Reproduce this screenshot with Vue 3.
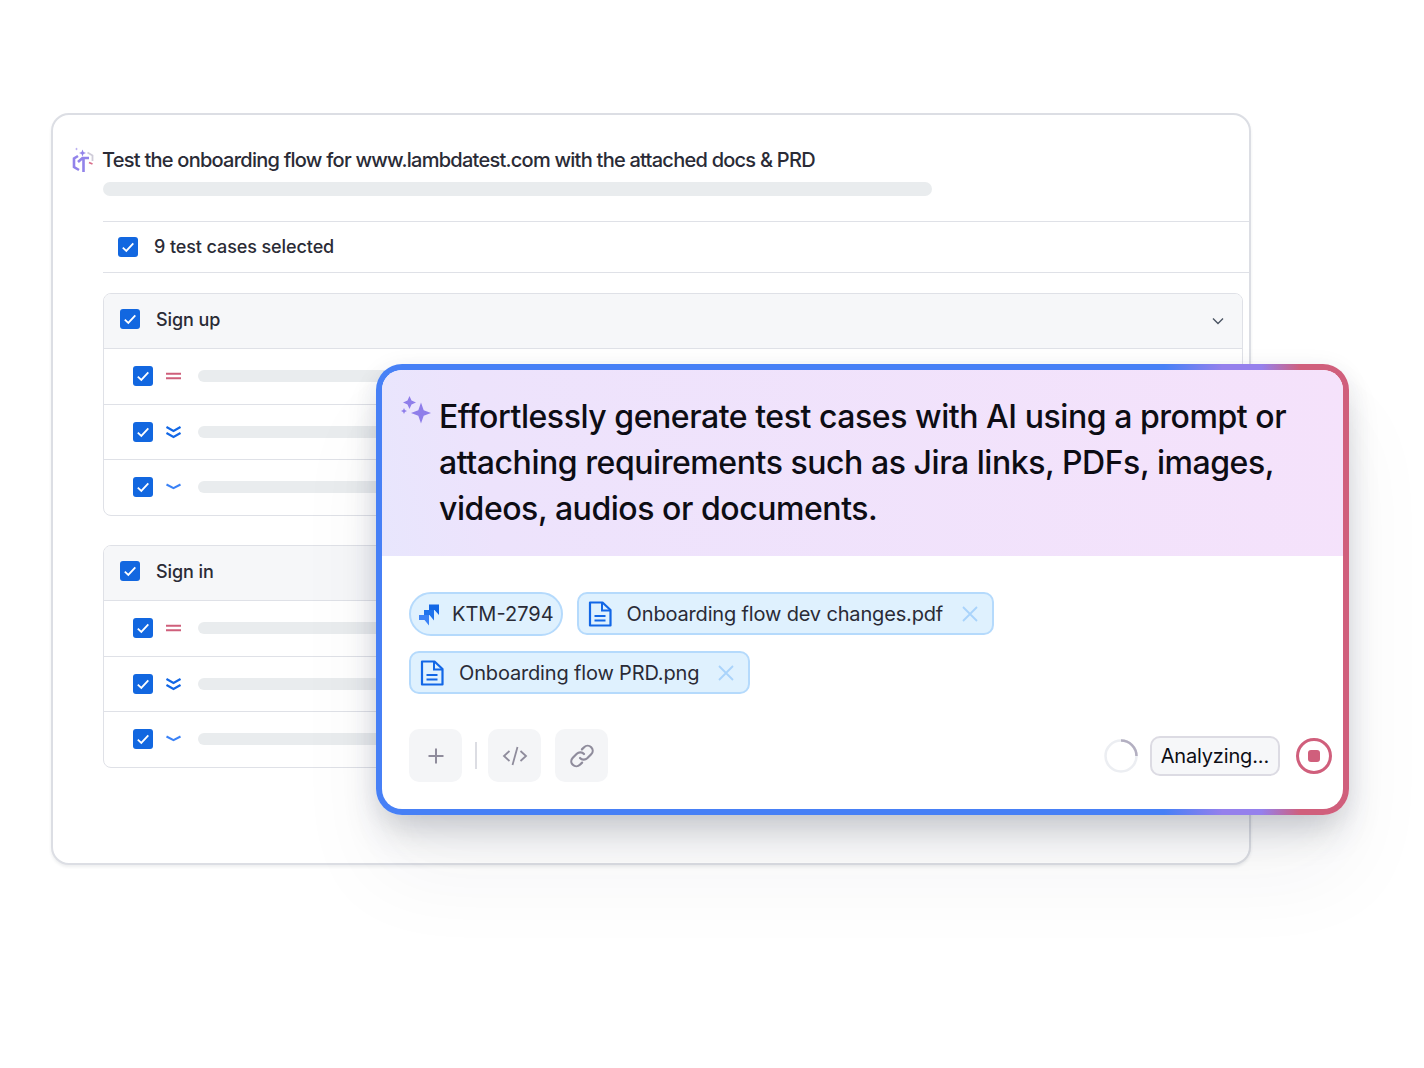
<script setup>
const groups = [
  { name: 'Sign up', rows: ['medium', 'lowest', 'low'] },
  { name: 'Sign in', rows: ['medium', 'lowest', 'low'] },
]
</script>

<template>
  <div class="stage">
    <section class="card">
      <div class="title-row">
        <svg class="ai-icon" viewBox="0 0 22 26" width="22" height="26" fill="none">
          <path d="M10.500 2.500l1 2.500 2.500 1-2.500 1-1 2.500-1-2.500-2.500-1 2.500-1z" fill="#9283ea" />
          <path d="M4.500 0.500l0.500 1 1 0.500-1 0.500-0.500 1-0.500-1-1-0.500 1-0.500z" fill="#b3a8f0" />
          <path d="M6 9L2 11.500V20l5 3" stroke="#9283ea" stroke-width="2.600" />
          <path d="M6 15l4.500-4H17M11.500 11.500V25" stroke="#9283ea" stroke-width="2.600" />
          <path d="M15.500 5.500L20.500 8.500V14" stroke="#cfccd9" stroke-width="1.800" />
          <path d="M17 15.500l3.500 1.500" stroke="#d9708c" stroke-width="1.800" />
        </svg>
        <div class="title-body">
          <h1 class="title">Test the onboarding flow for www.lambdatest.com with the attached docs &amp; PRD</h1>
          <div class="title-bar"></div>
        </div>
      </div>

      <div class="selected">
        <span class="check">
          <svg viewBox="0 0 20 20" width="20" height="20" fill="none"><path d="M4.800 10.600l3.500 3.300 7-7.600" stroke="#fff" stroke-width="1.800" /></svg>
        </span>
        <span>9 test cases selected</span>
      </div>

      <div class="groups">
        <div v-for="group in groups" :key="group.name" class="group">
          <div class="group-head">
            <span class="check">
              <svg viewBox="0 0 20 20" width="20" height="20" fill="none"><path d="M4.800 10.600l3.500 3.300 7-7.600" stroke="#fff" stroke-width="1.800" /></svg>
            </span>
            <span class="group-name">{{ group.name }}</span>
            <svg class="chev" viewBox="0 0 14 14" width="14" height="14" fill="none"><path d="M2 4.500l5 5 5-5" stroke="#4b5563" stroke-width="1.400" /></svg>
          </div>
          <div v-for="(row, i) in group.rows" :key="i" class="row">
            <span class="check">
              <svg viewBox="0 0 20 20" width="20" height="20" fill="none"><path d="M4.800 10.600l3.500 3.300 7-7.600" stroke="#fff" stroke-width="1.800" /></svg>
            </span>
            <svg v-if="row === 'medium'" class="prio" viewBox="0 0 15 12" width="15" height="12" fill="none"><path d="M0 3.700h15M0 8.200h15" stroke="#cf5f7b" stroke-width="2" /></svg>
            <svg v-else-if="row === 'lowest'" class="prio" viewBox="0 0 15 14" width="15" height="14" fill="none"><path d="M0.500 2l7 4 7-4M0.500 8l7 4 7-4" stroke="#1267e6" stroke-width="2.100" /></svg>
            <svg v-else class="prio" viewBox="0 0 15 12" width="15" height="12" fill="none"><path d="M0.500 3.500l7 3.600 7-3.600" stroke="#3b82f6" stroke-width="2.100" /></svg>
            <div class="row-bar"></div>
          </div>
        </div>
      </div>
    </section>

    <section class="popup">
      <div class="popup-inner">
        <header class="popup-head">
          <svg class="sparkle" viewBox="0 0 32 32" width="32" height="32" fill="#8f7eea">
            <path d="M9.500 2l2 4.500 4.500 2-4.500 2-2 4.500-2-4.500-4.500-2 4.500-2z" />
            <path d="M21 8.500l2.700 7.800 7.300 2.700-7.300 2.700-2.700 7.800-2.700-7.800-7.300-2.700 7.300-2.700z" />
            <path d="M4 14l0.900 2.100 2.100 0.900-2.100 0.900-0.900 2.100-0.900-2.100-2.100-0.900 2.100-0.900z" />
          </svg>
          <p class="headline">Effortlessly generate test cases with AI using a prompt or attaching requirements such as Jira links, PDFs, images, videos, audios or documents.</p>
        </header>

        <div class="popup-body">
          <div class="chips">
            <div class="chip-line">
              <div class="chip pill">
                <svg viewBox="0 0 22 23" width="22" height="23" fill="none">
                  <path d="M1 12h10v10.500L6.500 17H1z" fill="#3b82f6" />
                  <path d="M6 7h10v10.500L11.500 12H6z" fill="#1f73ec" />
                  <path d="M11 1.500h10V12L16.500 7H11z" fill="#1267e6" />
                </svg>
                <span>KTM-2794</span>
              </div>
              <div class="chip doc">
                <svg viewBox="0 0 24 26" width="24" height="26" fill="none">
                  <path d="M2 1.500h12.500L22.500 9v15.500H2z" stroke="#1267e6" stroke-width="2.200" stroke-linejoin="round" />
                  <path d="M14 1.500V9.500h8.500M6.500 15h11M6.500 19.500h11" stroke="#1267e6" stroke-width="2" />
                </svg>
                <span>Onboarding flow dev changes.pdf</span>
                <svg class="x" viewBox="0 0 18 18" width="18" height="18" fill="none"><path d="M2 2l14 14M16 2L2 16" stroke="#a9d3fb" stroke-width="1.800" /></svg>
              </div>
            </div>
            <div class="chip-line">
              <div class="chip doc">
                <svg viewBox="0 0 24 26" width="24" height="26" fill="none">
                  <path d="M2 1.500h12.500L22.500 9v15.500H2z" stroke="#1267e6" stroke-width="2.200" stroke-linejoin="round" />
                  <path d="M14 1.500V9.500h8.500M6.500 15h11M6.500 19.500h11" stroke="#1267e6" stroke-width="2" />
                </svg>
                <span>Onboarding flow PRD.png</span>
                <svg class="x" viewBox="0 0 18 18" width="18" height="18" fill="none"><path d="M2 2l14 14M16 2L2 16" stroke="#a9d3fb" stroke-width="1.800" /></svg>
              </div>
            </div>
          </div>

          <div class="toolbar">
            <button class="tool" type="button">
              <svg viewBox="0 0 20 20" width="20" height="20" fill="none"><path d="M10 2.500v15M2.500 10h15" stroke="#8f8c9c" stroke-width="2" /></svg>
            </button>
            <span class="sep"></span>
            <button class="tool" type="button">
              <svg viewBox="0 0 26 22" width="26" height="22" fill="none"><path d="M7.500 6L2 11l5.500 5M18.500 6L24 11l-5.500 5M15.500 2l-5 18" stroke="#8f8c9c" stroke-width="1.800" /></svg>
            </button>
            <button class="tool" type="button">
              <svg viewBox="0 0 26 26" width="26" height="26" fill="none"><path d="M11 15a5 5 0 0 0 7.200 0.300l4-4a5 5 0 0 0-7.100-7.100l-2.200 2.200" stroke="#8f8c9c" stroke-width="2.200" stroke-linecap="round" /><path d="M15 11a5 5 0 0 0-7.200-0.300l-4 4a5 5 0 0 0 7.100 7.100l2.200-2.200" stroke="#8f8c9c" stroke-width="2.200" stroke-linecap="round" /></svg>
            </button>
            <div class="status">
              <svg class="spin" viewBox="0 0 34 34" width="34" height="34" fill="none">
                <circle cx="17" cy="17" r="15.500" stroke="#eceef2" stroke-width="2.500" />
                <path d="M17 1.500A15.500 15.500 0 0 1 32.500 17" stroke="#b3afc1" stroke-width="2.500" />
              </svg>
              <span class="analyzing">Analyzing...</span>
              <span class="stop"><span class="stop-dot"></span></span>
            </div>
          </div>
        </div>
      </div>
    </section>
  </div>
</template>

<style scoped>
.stage {
  position: relative;
  width: 1424px;
  height: 1068px;
  padding: 113px 0 0 51px;
  box-sizing: border-box;
  background: #fff;
  overflow: hidden;
  font-family: Inter, "Liberation Sans", sans-serif;
  color: #2a2b36;
}
.card {
  width: 1200px;
  height: 752px;
  box-sizing: border-box;
  border: 2px solid #dcdee4;
  border-radius: 18px;
  padding: 20px 0 0 19px;
  background: #fff;
  box-shadow: 0 2px 3px rgba(60, 64, 80, 0.09);
}
.title-row {
  display: flex;
  gap: 10px;
}
.ai-icon {
  flex: none;
  margin-top: 12px;
  margin-right: -1px;
}
.title-body {
  flex: 1;
  padding-top: 12px;
}
.title {
  margin: 0 0 0 -1px;
  font-size: 20px;
  line-height: 26px;
  font-weight: 500;
  letter-spacing: -0.75px;
  color: #2a2b36;
}
.title-bar {
  width: 829px;
  height: 14px;
  margin-top: 9px;
  border-radius: 7px;
  background: #e9ecee;
}
.selected {
  display: flex;
  align-items: center;
  gap: 16px;
  height: 52px;
  box-sizing: border-box;
  margin: 25px 0 0 31px;
  padding-left: 15px;
  border-top: 1px solid #dfe1e7;
  border-bottom: 1px solid #dfe1e7;
  font-size: 18px;
  font-weight: 500;
  letter-spacing: -0.1px;
  color: #2a2b36;
}
.selected > span:last-child {
  margin-top: -2px;
}
.check {
  flex: none;
  width: 20px;
  height: 20px;
  border-radius: 3px;
  background: #1267e0;
  display: flex;
}
.groups {
  display: flex;
  flex-direction: column;
  gap: 29.500px;
  width: 1140px;
  margin: 20px 0 0 31px;
}
.group {
  border: 1px solid #dfe1e7;
  border-radius: 8px;
  overflow: hidden;
}
.group-head {
  display: flex;
  align-items: center;
  height: 54px;
  box-sizing: border-box;
  padding: 0 17px 5px 16px;
  background: #f6f7f9;
  font-size: 18px;
  font-weight: 500;
  letter-spacing: -0.1px;
}
.group-name {
  flex: 1;
  margin-left: 16px;
  padding-top: 2px;
}
.chev {
  margin-top: 4px;
}
.row {
  display: flex;
  align-items: center;
  height: 55.500px;
  padding-left: 29px;
  border-top: 1px solid #dfe1e7;
  box-sizing: border-box;
}
.prio {
  flex: none;
  margin-left: 13px;
}
.row-bar {
  width: 400px;
  height: 12px;
  margin-left: 17px;
  border-radius: 6px;
  background: #e9ecee;
}
.popup {
  position: absolute;
  left: 376px;
  top: 364px;
  width: 973px;
  height: 451px;
  box-sizing: border-box;
  padding: 6px;
  border-radius: 26px;
  background: linear-gradient(90deg, #4780f6 0%, #4780f6 81%, #9580ec 87%, #9580ec 91%, #d05f7c 95%, #d05f7c 100%);
  box-shadow: 0 22px 36px -6px rgba(40, 48, 70, 0.2), 0 4px 24px rgba(40, 48, 70, 0.07), 0 60px 90px rgba(40, 44, 60, 0.05);
}
.popup-inner {
  height: 100%;
  border-radius: 20px;
  overflow: hidden;
  background: #fff;
}
.popup-head {
  display: flex;
  height: 186px;
  box-sizing: border-box;
  padding: 24px 40px 0 18px;
  background: linear-gradient(80deg, #e8e6fd 0%, #ede3fc 12%, #f5e2fb 100%);
}
.sparkle {
  flex: none;
  margin-right: 7px;
}
.headline {
  margin: 0;
  font-size: 32px;
  line-height: 46px;
  font-weight: 500;
  letter-spacing: -0.45px;
  color: #0d0d14;
}
.popup-body {
  padding: 36px 26px 0 27px;
}
.chips {
  display: flex;
  flex-direction: column;
  gap: 15px;
  align-items: flex-start;
}
.chip-line {
  display: flex;
  gap: 14px;
  align-items: flex-start;
}
.chip {
  display: flex;
  align-items: center;
  box-sizing: border-box;
  border: 2px solid #b5dafc;
  background: #dff1fe;
  font-size: 20px;
  font-weight: 400;
  letter-spacing: -0.16px;
  color: #2a2b36;
  white-space: nowrap;
}
.pill {
  height: 44px;
  padding: 0 7px 0 7px;
  border-radius: 22px;
  gap: 12px;
}
.pill span {
  letter-spacing: 0;
}
.doc {
  height: 43px;
  padding: 0 13px 0 9px;
  border-radius: 10px;
  gap: 15px;
}
.x {
  margin-left: 3px;
}
.toolbar {
  display: flex;
  align-items: center;
  margin-top: 35px;
}
.tool {
  width: 53px;
  height: 53px;
  padding: 0;
  border: none;
  border-radius: 10px;
  background: #f4f5f7;
  display: flex;
  align-items: center;
  justify-content: center;
}
.tool + .tool {
  margin-left: 14px;
}
.sep {
  width: 2px;
  height: 27px;
  margin: 0 11px 0 13px;
  background: #dcdde3;
}
.status {
  display: flex;
  align-items: center;
  margin-left: auto;
  margin-right: -15px;
}
.analyzing {
  margin-left: 12px;
  height: 40px;
  box-sizing: border-box;
  padding: 0 9px;
  display: flex;
  align-items: center;
  border: 2px solid #dcdbe3;
  border-radius: 10px;
  background: #f6f7f9;
  font-size: 20px;
  letter-spacing: -0.16px;
  color: #0d0d14;
}
.stop {
  margin-left: 16px;
  width: 36px;
  height: 36px;
  box-sizing: border-box;
  border: 3px solid #d05f7c;
  border-radius: 50%;
  display: flex;
  align-items: center;
  justify-content: center;
}
.stop-dot {
  width: 12px;
  height: 12px;
  border-radius: 3px;
  background: #d05f7c;
}
</style>
